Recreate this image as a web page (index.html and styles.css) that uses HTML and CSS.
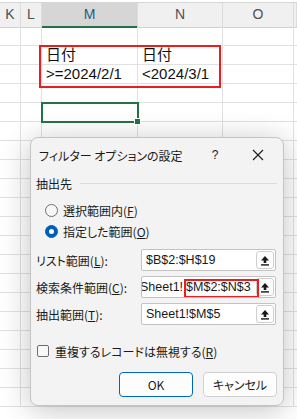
FILE: index.html
```html
<!DOCTYPE html>
<html lang="ja">
<head>
    <meta charset="UTF-8">
    <title>フィルター オプションの設定</title>
    <link rel="stylesheet" href="styles.css">
</head>
<body>
    <div id="sheet">
        <div class="topStrip"></div>
        <div class="row headRow">
            <div class="cell head">K</div>
            <div class="cell head">L</div>
            <div class="cell head active">M</div>
            <div class="cell head">N</div>
            <div class="cell head">O</div>
            <div class="cell head"></div>
        </div>
        <div class="row"><div class="cell"></div><div class="cell"></div><div class="cell"></div><div class="cell"></div><div class="cell"></div><div class="cell"></div></div>
        <div class="row"><div class="cell"></div><div class="cell"></div><div class="cell">日付</div><div class="cell">日付</div><div class="cell"></div><div class="cell"></div></div>
        <div class="row"><div class="cell"></div><div class="cell"></div><div class="cell">&gt;=2024/2/1</div><div class="cell">&lt;2024/3/1</div><div class="cell"></div><div class="cell"></div></div>
        <div class="row"><div class="cell"></div><div class="cell"></div><div class="cell"></div><div class="cell"></div><div class="cell"></div><div class="cell"></div></div>
        <div class="row"><div class="cell"></div><div class="cell"></div><div class="cell"></div><div class="cell"></div><div class="cell"></div><div class="cell"></div></div>
        <div class="row"><div class="cell"></div><div class="cell"></div><div class="cell"></div><div class="cell"></div><div class="cell"></div><div class="cell"></div></div>
        <div class="row"><div class="cell"></div><div class="cell"></div><div class="cell"></div><div class="cell"></div><div class="cell"></div><div class="cell"></div></div>
        <div class="row"><div class="cell"></div><div class="cell"></div><div class="cell"></div><div class="cell"></div><div class="cell"></div><div class="cell"></div></div>
        <div class="row"><div class="cell"></div><div class="cell"></div><div class="cell"></div><div class="cell"></div><div class="cell"></div><div class="cell"></div></div>
        <div class="row"><div class="cell"></div><div class="cell"></div><div class="cell"></div><div class="cell"></div><div class="cell"></div><div class="cell"></div></div>
        <div class="row"><div class="cell"></div><div class="cell"></div><div class="cell"></div><div class="cell"></div><div class="cell"></div><div class="cell"></div></div>
        <div class="row"><div class="cell"></div><div class="cell"></div><div class="cell"></div><div class="cell"></div><div class="cell"></div><div class="cell"></div></div>
        <div class="row"><div class="cell"></div><div class="cell"></div><div class="cell"></div><div class="cell"></div><div class="cell"></div><div class="cell"></div></div>
        <div class="row"><div class="cell"></div><div class="cell"></div><div class="cell"></div><div class="cell"></div><div class="cell"></div><div class="cell"></div></div>
        <div class="row"><div class="cell"></div><div class="cell"></div><div class="cell"></div><div class="cell"></div><div class="cell"></div><div class="cell"></div></div>
        <div class="row"><div class="cell"></div><div class="cell"></div><div class="cell"></div><div class="cell"></div><div class="cell"></div><div class="cell"></div></div>
        <div class="row"><div class="cell"></div><div class="cell"></div><div class="cell"></div><div class="cell"></div><div class="cell"></div><div class="cell"></div></div>
        <div class="row"><div class="cell"></div><div class="cell"></div><div class="cell"></div><div class="cell"></div><div class="cell"></div><div class="cell"></div></div>
        <div class="row"><div class="cell"></div><div class="cell"></div><div class="cell"></div><div class="cell"></div><div class="cell"></div><div class="cell"></div></div>
        <div class="row"><div class="cell"></div><div class="cell"></div><div class="cell"></div><div class="cell"></div><div class="cell"></div><div class="cell"></div></div>

        <!-- criteria range highlight -->
        <div id="criteriaBox"></div>
        <!-- active cell M5 -->
        <div id="activeCell"><span class="fillHandle"></span></div>
    </div>

    <div id="dialog">
        <div class="titleBar">
            <span class="title">フィルター オプションの設定</span>
            <span class="help">?</span>
            <span class="close">
                <svg width="12" height="12" viewBox="0 0 12 12"><path d="M1 1 L11 11 M11 1 L1 11" stroke="#1a1a1a" stroke-width="1.1" fill="none"/></svg>
            </span>
        </div>

        <div class="group">
            <span>抽出先</span>
            <span class="groupLine"></span>
        </div>
        <div class="radio firstRadio"><span class="dot"></span>選択範囲内(<u>F</u>)</div>
        <div class="radio"><span class="dot checked"></span>指定した範囲(<u>O</u>)</div>

        <div class="fields">
            <div class="field">
                <span class="label">リスト範囲(<u>L</u>):</span>
                <div class="input">
                    <span class="value">$B$2:$H$19</span>
                    <span class="pick"><svg width="10" height="11" viewBox="0 0 10 11"><path d="M5 1 L9 5.5 H6.3 V8 H3.7 V5.5 H1 Z" fill="#1a1a1a"/><rect x="1" y="9.2" width="8" height="1.4" fill="#1a1a1a"/></svg></span>
                </div>
            </div>
            <div class="field">
                <span class="label">検索条件範囲(<u>C</u>):</span>
                <div class="input">
                    <span class="value scrolled">Sheet1!<span class="ref">$M$2:$N$3</span></span>
                    <span class="pick"><svg width="10" height="11" viewBox="0 0 10 11"><path d="M5 1 L9 5.5 H6.3 V8 H3.7 V5.5 H1 Z" fill="#1a1a1a"/><rect x="1" y="9.2" width="8" height="1.4" fill="#1a1a1a"/></svg></span>
                    <span id="refBox"></span>
                </div>
            </div>
            <div class="field">
                <span class="label">抽出範囲(<u>T</u>):</span>
                <div class="input">
                    <span class="value">Sheet1!$M$5</span>
                    <span class="pick"><svg width="10" height="11" viewBox="0 0 10 11"><path d="M5 1 L9 5.5 H6.3 V8 H3.7 V5.5 H1 Z" fill="#1a1a1a"/><rect x="1" y="9.2" width="8" height="1.4" fill="#1a1a1a"/></svg></span>
                </div>
            </div>
        </div>

        <div class="check"><span class="box"></span>重複するレコードは無視する(<u>R</u>)</div>

        <div class="buttons">
            <button class="btn default">OK</button>
            <button class="btn">キャンセル</button>
        </div>
    </div>
</body>
</html>
```

FILE: styles.css
```css
body {
    margin: 0;
    width: 297px;
    height: 419px;
    overflow: hidden;
    background: #fff;
    font-family: "Liberation Sans", "Noto Sans CJK JP", sans-serif;
    position: relative;
}
#sheet {
    position: relative;
}
.topStrip {
    height: 3px;
    background: #fff;
    border-bottom: 1px solid #d6d6d6;
    box-sizing: border-box;
}
.row {
    display: grid;
    grid-template-columns: 21px 21px 96px 85px 71px 1fr;
    height: 19px;
}
.cell {
    border-right: 1px solid #e1e1e1;
    border-bottom: 1px solid #e1e1e1;
    box-sizing: border-box;
    font-size: 15px;
    line-height: 18px;
    padding-left: 4px;
    color: #111;
    white-space: nowrap;
}
.headRow {
    height: 24px;
    background: #f0f0f0;
}
.head {
    background: #f0f0f0;
    border-bottom: 1px solid #d0d0d0;
    border-right: 1px solid #dcdcdc;
    padding: 0;
    text-align: center;
    line-height: 23px;
    font-size: 14px;
    color: #505050;
}
.head.active {
    background: #d6d6d6;
    border-bottom: 2px solid #217346;
    color: #255e80;
}
#criteriaBox {
    position: absolute;
    left: 39px;
    top: 45px;
    width: 182px;
    height: 43px;
    border: 2px solid #ee1c1c;
    box-sizing: border-box;
}
#activeCell {
    position: absolute;
    left: 41px;
    top: 102px;
    width: 98px;
    height: 21px;
    border: 2px solid #217346;
    box-sizing: border-box;
}
.fillHandle {
    position: absolute;
    right: -4px;
    bottom: -4px;
    width: 5px;
    height: 5px;
    background: #217346;
    border: 1px solid #fff;
}

/* dialog */
#dialog {
    position: absolute;
    left: 30px;
    top: 137px;
    width: 254px;
    height: 269px;
    box-sizing: border-box;
    background: #f3f3f3;
    border: 1px solid #c4c4c4;
    border-radius: 8px;
    box-shadow: 0 4px 30px rgba(0, 0, 0, 0.24);
    font-family: "Noto Sans CJK JP", sans-serif;
    font-feature-settings: "palt";
    font-size: 12px;
    color: #1a1a1a;
    padding: 0 6px 0 5px;
}
.titleBar {
    display: flex;
    align-items: center;
    height: 34px;
    padding-left: 3px;
}
.title {
    flex: 1;
}
.help {
    width: 20px;
    text-align: center;
    font-family: "Liberation Sans", sans-serif;
    margin-right: 23px;
}
.close {
    width: 20px;
    display: flex;
    justify-content: center;
    margin-right: 9px;
}
.group {
    display: flex;
    align-items: center;
    height: 20px;
    margin-top: 1px;
}
.groupLine {
    flex: 1;
    height: 1px;
    background: #dcdcdc;
    margin-left: 8px;
}
.radio {
    display: flex;
    align-items: center;
    height: 21px;
    padding-left: 9px;
}
.firstRadio {
    margin-top: 7px;
}
.dot {
    width: 11px;
    height: 11px;
    border: 1px solid #6e6e6e;
    border-radius: 50%;
    background: #f8f8f8;
    margin-right: 5px;
    box-sizing: content-box;
}
.dot.checked {
    background: #005fb8;
    border-color: #005fb8;
    position: relative;
}
.dot.checked::after {
    content: "";
    position: absolute;
    left: 3px;
    top: 3px;
    width: 5px;
    height: 5px;
    border-radius: 50%;
    background: #fff;
}
.fields {
    margin-top: 7px;
    display: flex;
    flex-direction: column;
    gap: 5px;
}
.field {
    display: flex;
    align-items: center;
    height: 22px;
}
.label {
    width: 105px;
}
.input {
    position: relative;
    flex: 1;
    height: 22px;
    box-sizing: border-box;
    background: #fff;
    border: 1px solid #c2c2c2;
    border-radius: 2px;
    display: flex;
    align-items: center;
    overflow: hidden;
    margin-right: 1px;
}
.value {
    flex: 1;
    padding-left: 4px;
    font-family: "Liberation Sans", sans-serif;
    font-size: 12.5px;
    white-space: nowrap;
    overflow: hidden;
}
.value.scrolled {
    text-indent: -6px;
}
.ref {
    margin-left: 3px;
}
.pick {
    width: 18px;
    height: 18px;
    margin-right: 1px;
    box-sizing: border-box;
    border: 1px solid #cfcfcf;
    border-radius: 3px;
    background: #fdfdfd;
    display: flex;
    align-items: center;
    justify-content: center;
    flex-shrink: 0;
}
#refBox {
    position: absolute;
    left: 42px;
    top: 2px;
    width: 75px;
    height: 19px;
    border: 2px solid #ee1c1c;
    box-sizing: border-box;
}
.check {
    display: flex;
    align-items: center;
    margin-top: 16px;
    height: 20px;
    padding-left: 1px;
}
.box {
    width: 10px;
    height: 10px;
    border: 1px solid #6e6e6e;
    border-radius: 2px;
    margin-right: 6px;
    background: #f8f8f8;
}
.buttons {
    display: flex;
    justify-content: flex-end;
    gap: 10px;
    margin-top: 11px;
    padding-right: 0;
}
.btn {
    width: 74px;
    height: 25px;
    font-family: "Noto Sans CJK JP", sans-serif;
    font-feature-settings: "palt";
    font-size: 12px;
    color: #1a1a1a;
    background: #fdfdfd;
    border: 1px solid #d0d0d0;
    border-radius: 4px;
    padding: 0;
}
.btn.default {
    border-color: #0067c0;
}
```
